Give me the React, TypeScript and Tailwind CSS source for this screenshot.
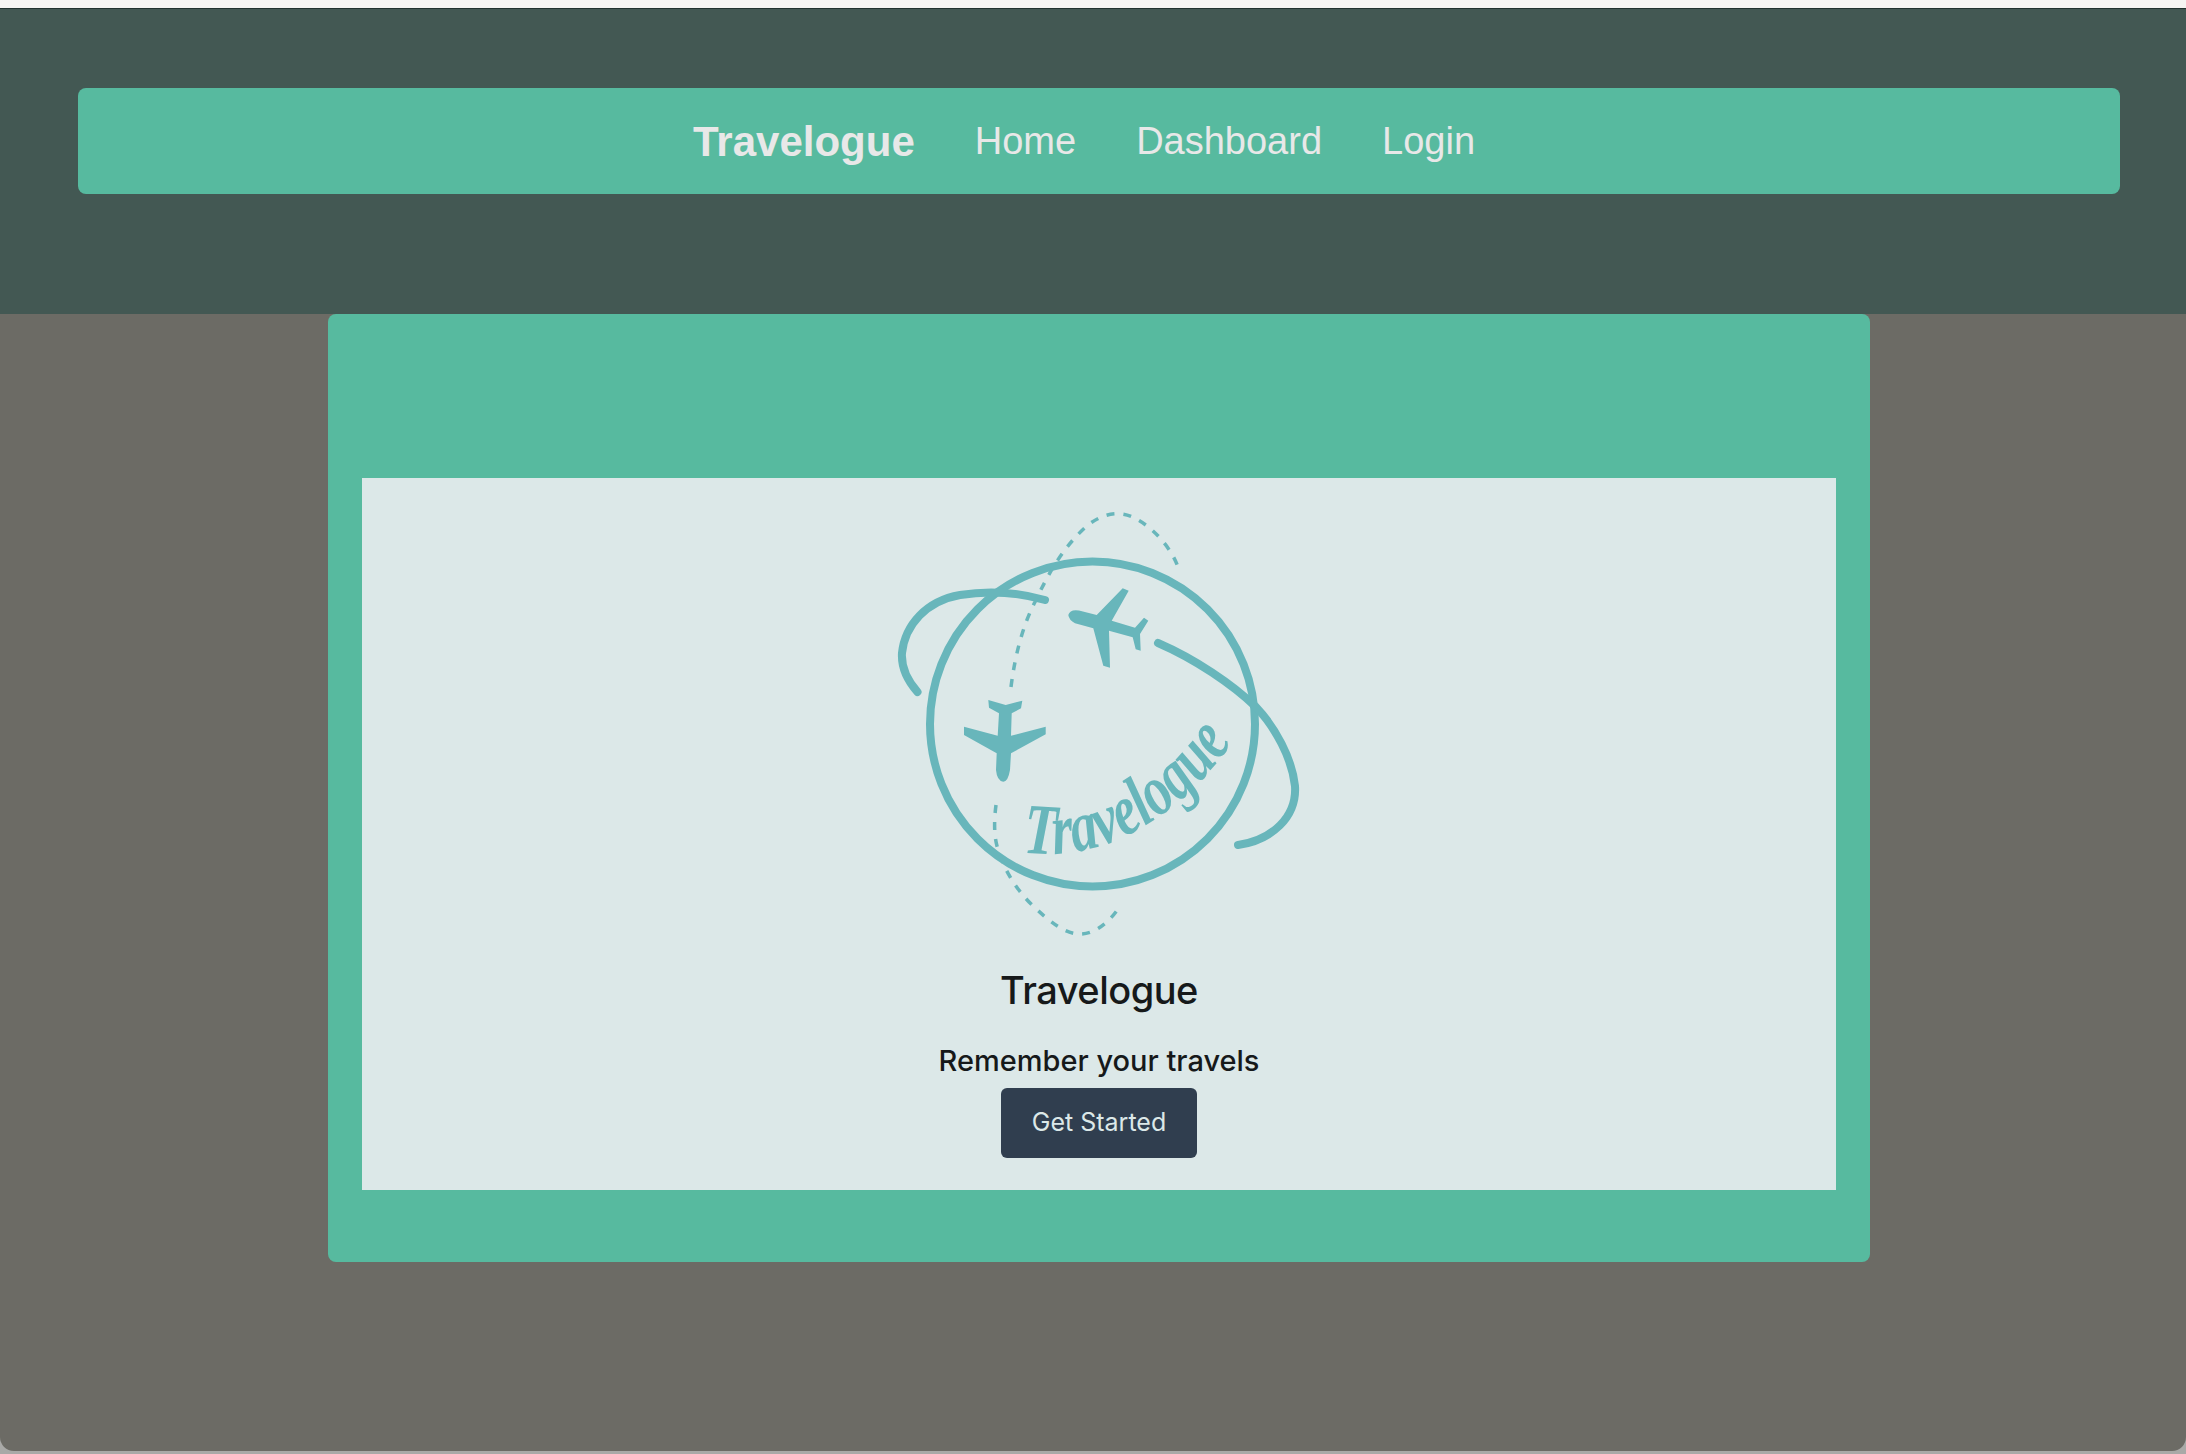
const font = 'font-["Inter","Liberation_Sans",sans-serif]'

const TravelogueLogo = () => (
  <svg viewBox="9 0 460 460" className="w-[460px] h-[460px] shrink-0" fill="none">
    <circle cx="232.5" cy="234" r="162.5" stroke="#68b6bb" strokeWidth="8" />
    <path
      d="M185 110 C 160 103, 130 100, 100 105 C 66 111, 45 135, 42 163 C 41 178, 47 190, 57.5 202"
      stroke="#68b6bb"
      strokeWidth="8"
      strokeLinecap="round"
    />
    <path
      d="M298 153 C 335 169, 372 194, 396 217 C 415 237, 432 268, 435 296 C 437 327, 412 350, 378 355"
      stroke="#68b6bb"
      strokeWidth="8"
      strokeLinecap="round"
    />
    <path
      d="M151 197 C 155 165, 163 135, 175 112 C 190 80, 205 55, 228 35 C 245 22, 262 20, 278 30 C 296 40, 312 60, 318 77"
      stroke="#68b6bb"
      strokeWidth="3.5"
      strokeDasharray="8 9"
    />
    <path
      d="M136 315 C 134 330, 134 345, 137 356 C 143 378, 155 398, 172 415 C 190 432, 205 444, 220 444 C 235 444, 250 432, 260 416"
      stroke="#68b6bb"
      strokeWidth="3.5"
      strokeDasharray="8 9"
    />
    {/* plane, flying down */}
    <path
      d="M128.3 210 L145.7 215 L162.3 210.7 L161 218.3 L151.7 223.3 L151 245.7 L185.7 236.7 L185.7 244.3 L151 263.3 L150 280 Q148 291.7 143.3 291.7 Q137 291 136 280 L136.7 263.3 L104 245 L104 236.7 L137.7 245.7 L139 223.3 L129 217.7 Z"
      fill="#68b6bb"
    />
    {/* plane, flying up left */}
    <path
      d="M208.3 125 Q210 119 219 120.5 L236.7 125 L262.7 98.3 L268.7 100.7 L251.7 130.7 L275 137.7 L284 127.7 L288.3 130.7 L280 144 L280.7 160.7 L275.7 159.3 L272.7 147.3 L249 140.7 L250 177.7 L243.3 175.7 L233.3 138.3 L215 133.3 Q209 130 208.3 125 Z"
      fill="#68b6bb"
    />
    <path id="logo-arc" d="M163 362 C 225 372, 308 345, 374 250" />
    <text
      fill="#68b6bb"
      fontFamily="'Liberation Serif', serif"
      fontStyle="italic"
      fontWeight="700"
      fontSize="72"
    >
      <textPath href="#logo-arc" textLength="250" lengthAdjust="spacingAndGlyphs">
        Travelogue
      </textPath>
    </text>
  </svg>
)

export default function App() {
  return (
    <div className={`w-full h-[1454px] overflow-hidden bg-[#a9a9a7] ${font}`}>
      <div className="h-2 bg-[#f6f5f3]" />
      <div className="relative h-[1443px] bg-[#6c6b65] rounded-b-[14px] overflow-hidden">
        <header className="h-[306px] pt-[79px] pl-[78px] pr-[66px] bg-[#435853] border-t border-[#22332f]">
          <nav className='h-[106px] pr-[30px] flex items-center justify-center gap-[60px] bg-[#57ba9f] rounded-[8px] text-[#e8e8e8] text-[38px] font-["Liberation_Sans",sans-serif]'>
            <a className="font-bold text-[42px]">Travelogue</a>
            <a>Home</a>
            <a>Dashboard</a>
            <a>Login</a>
          </nav>
        </header>
        <main className="ml-[328px] w-[1542px] h-[948px] px-[34px] pt-[164px] bg-[#57ba9f] rounded-[8px]">
          <section className="h-[712px] pt-[12px] flex flex-col items-center bg-[#dce8e8] text-[#16191a]">
            <TravelogueLogo />
            <h1 className="mt-[14px] text-[38px] leading-[52px] font-medium tracking-[-0.5px]">Travelogue</h1>
            <p className="mt-[25px] text-[29px] leading-[40px] font-medium">Remember your travels</p>
            <button className="mt-[7px] w-[196px] h-[70px] rounded-[6px] bg-[#303e4f] text-[#dce8e8] text-[25px]">
              Get Started
            </button>
          </section>
        </main>
      </div>
      <p className="ml-[355px] h-[3px] overflow-hidden text-[26px] leading-[30px] text-[#333]">(a) New Table</p>
    </div>
  )
}
